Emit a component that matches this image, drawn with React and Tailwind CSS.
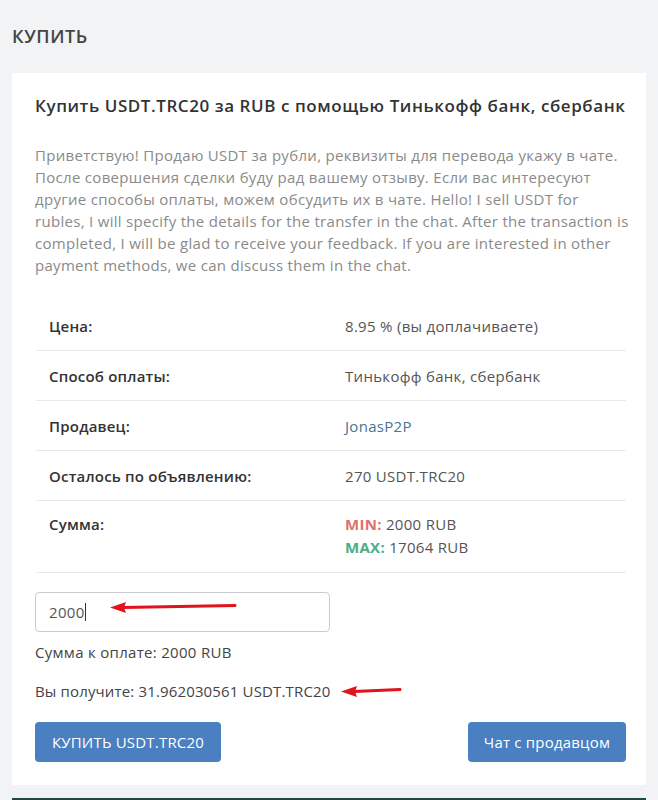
import React from 'react';

const font = { fontFamily: '"Open Sans", "Liberation Sans", sans-serif' };

const description = [
    'Приветствую! Продаю USDT за рубли, реквизиты для перевода укажу в чате.',
    'После совершения сделки буду рад вашему отзыву. Если вас интересуют',
    'другие способы оплаты, можем обсудить их в чате. Hello! I sell USDT for',
    'rubles, I will specify the details for the transfer in the chat. After the transaction is',
    'completed, I will be glad to receive your feedback. If you are interested in other',
    'payment methods, we can discuss them in the chat.',
];

function Arrow({ className, width, height }) {
    return (
        <svg className={className} width={width} height={height} viewBox={`0 0 ${width} ${height}`} fill="none">
            <path d={`M${width - 2} ${height / 2 - 1.5} L14 ${height / 2 + 0.5}`} stroke="#e0141c" strokeWidth="3" strokeLinecap="round" />
            <path d={`M1 ${height / 2 + 0.5} L17 ${height / 2 - 5} L15 ${height / 2 + 0.5} L17 ${height / 2 + 6} Z`} fill="#e0141c" />
        </svg>
    );
}

function Row({ label, children, last }) {
    return (
        <div className={`flex border-b border-[#e8e9eb] px-[13px] ${last ? 'pt-[12px] pb-[14px]' : 'h-[50px] items-center'}`}>
            <div className="w-[296px] text-[15px] font-semibold text-[#333] leading-[22px] tracking-[0.2px]">{label}</div>
            <div className="flex-1 text-[15px] text-[#555] leading-[22px] tracking-[0.3px]">{children}</div>
        </div>
    );
}

export default function App() {
    return (
        <div style={font} className="bg-[#f2f3f5] min-h-[800px] px-[12px] flex flex-col">
            <div className="h-[73px] flex items-center text-[18px] font-semibold text-[#444] tracking-[0.6px]">КУПИТЬ</div>
            <div className="bg-white h-[712px] pl-[23px] pr-[20px] pt-[21px]">
                <h2 className="text-[17px] font-semibold text-[#333] leading-[24px] tracking-[0.57px]">Купить USDT.TRC20 за RUB с помощью Тинькофф банк, сбербанк</h2>
                <div className="mt-[26px] text-[15px] leading-[22px] text-[#8a8a8a] tracking-[0.3px] whitespace-nowrap">
                    {description.map((line) => (
                        <div key={line}>{line}</div>
                    ))}
                </div>
                <div className="mt-[25px] ml-[1px]">
                    <Row label="Цена:">8.95 % (вы доплачиваете)</Row>
                    <Row label="Способ оплаты:">Тинькофф банк, сбербанк</Row>
                    <Row label="Продавец:"><a className="text-[#4a7590]">JonasP2P</a></Row>
                    <Row label="Осталось по объявлению:">270 USDT.TRC20</Row>
                    <Row label="Сумма:" last>
                        <div><span className="font-bold text-[#e0706c]">MIN:</span> 2000 RUB</div>
                        <div className="mt-[1px]"><span className="font-bold text-[#4cae84]">MAX:</span> 17064 RUB</div>
                    </Row>
                </div>
                <div className="relative mt-[19px] w-[295px] h-[40px] border border-[#c9cbcf] rounded-[4px] flex items-center px-[13px] text-[15px] text-[#555] tracking-[0.3px]">
                    <span>2000</span>
                    <span className="w-[1px] h-[18px] bg-[#333]"></span>
                    <Arrow className="absolute left-[73px] top-[5px]" width={128} height={18} />
                </div>
                <div className="mt-[9px] text-[15px] leading-[22px] text-[#444] tracking-[0.3px]">Сумма к оплате: 2000 RUB</div>
                <div className="mt-[17px] flex items-center text-[15px] leading-[22px] text-[#444] tracking-[0.15px]">
                    <span>Вы получите: 31.962030561 USDT.TRC20</span>
                    <Arrow className="ml-[10px]" width={62} height={14} />
                </div>
                <div className="mt-[20px] flex justify-between">
                    <button className="h-[40px] rounded-[4px] bg-[#4a7fc2] text-white text-[15px] w-[186px] tracking-[0.2px]">КУПИТЬ USDT.TRC20</button>
                    <button className="h-[40px] rounded-[4px] bg-[#4a7fc2] text-white text-[15px] w-[158px] tracking-[0.2px]">Чат с продавцом</button>
                </div>
            </div>
            <div className="flex-1"></div>
            <div className="h-[2px] bg-[#1f4a44]"></div>
        </div>
    );
}
